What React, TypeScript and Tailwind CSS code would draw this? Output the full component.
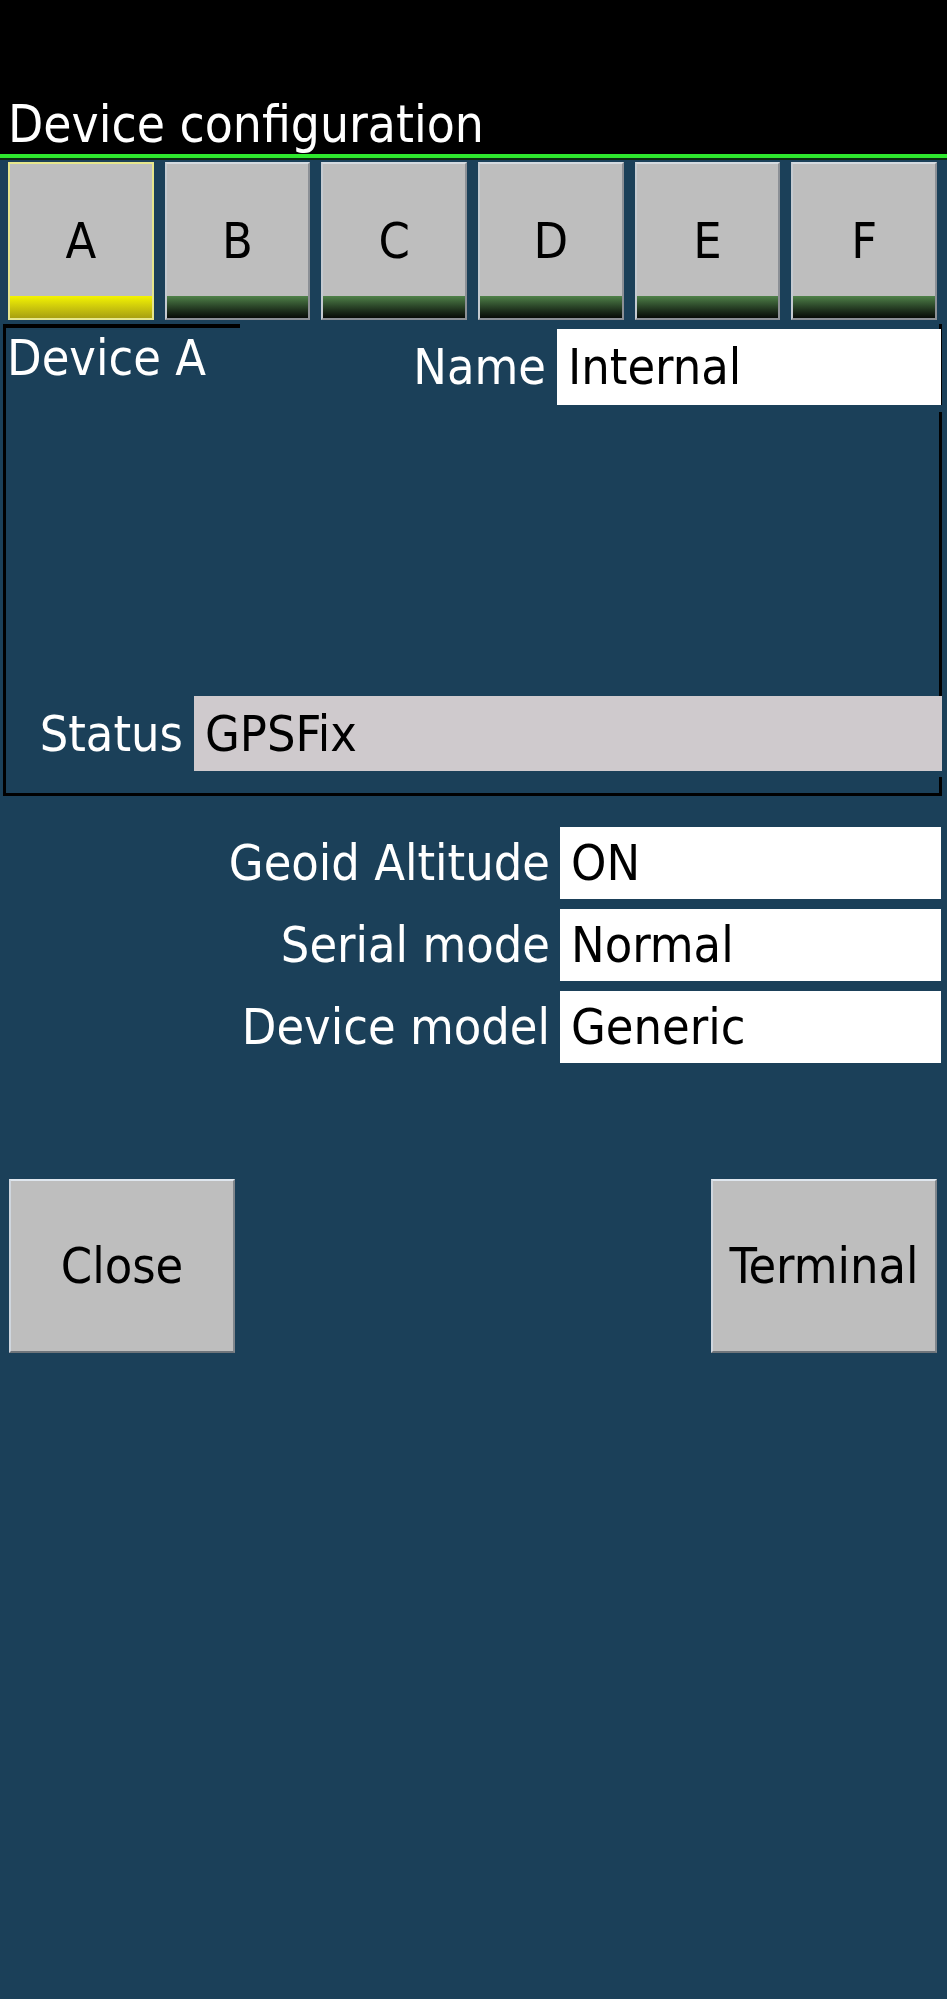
const font = { fontFamily: '"DejaVu Sans Condensed", "DejaVu Sans", sans-serif' }

const tabs = ['A', 'B', 'C', 'D', 'E', 'F']

function Tab({ label, selected }: { label: string; selected: boolean }) {
  return (
    <div
      className={`relative flex-1 flex items-center justify-center bg-[#bebebe] border-2 ${
        selected
          ? 'border-[#e6e68c]'
          : 'border-t-[#d4dae0] border-l-[#c4cad0] border-r-[#8c9096] border-b-[#8c9096]'
      }`}
    >
      <span className="text-[50px] leading-none text-black">{label}</span>
      <div
        className={`absolute inset-x-0 bottom-0 h-[22px] bg-gradient-to-b ${
          selected ? 'from-[#f4f400] to-[#a8a010]' : 'from-[#4f8249] to-[#080c08]'
        }`}
      />
    </div>
  )
}

function Field({ label, value }: { label: string; value: string }) {
  return (
    <div className="flex items-stretch justify-end h-[72px]">
      <span className="self-center pr-[10px] text-white text-[50px] leading-none">{label}</span>
      <div className="flex items-center pl-[11px] w-[381px] bg-white text-black text-[50px] leading-none">
        {value}
      </div>
    </div>
  )
}

function Button({ label }: { label: string }) {
  return (
    <button className="w-[226px] h-[174px] flex items-center justify-center bg-[#bebebe] border-2 border-t-[#dfe6ee] border-l-[#cfd6de] border-r-[#80868c] border-b-[#6f757b] text-black text-[50px] leading-none">
      {label}
    </button>
  )
}

export default function App() {
  return (
    <div className="min-h-[1999px] bg-[#1b4059]" style={font}>
      <div className="h-[154px] bg-black flex items-end pl-[8px] pb-[4px]">
        <h1 className="text-white text-[51px] leading-none">Device configuration</h1>
      </div>
      <div className="h-[4px] bg-[#2ee82e]" />
      <div className="h-[2px] bg-[#0c2a12]" />

      <div className="flex gap-[11px] pl-[8px] pr-[10px] pt-[2px] h-[160px]">
        {tabs.map((t) => (
          <Tab key={t} label={t} selected={t === 'A'} />
        ))}
      </div>

      <div className="ml-[3px] w-[939px] mt-[4px] border-x-[3px] border-b-[3px] border-black flex flex-col">
        <div className="-ml-[3px] w-[237px] h-[4px] bg-black" />
        <div className="flex items-start mt-[1px] h-[76px]">
          <span className="pl-[1px] pt-[4px] text-white text-[50px] leading-none">Device A</span>
          <div className="flex-1" />
          <span className="self-center pr-[11px] text-white text-[50px] leading-none">Name</span>
          <div className="relative -mr-[2px] w-[384px] h-full flex items-center pl-[11px] bg-white text-black text-[50px] leading-none">
            Internal
          </div>
        </div>
        <div className="relative -mr-[3px] h-[7px] bg-[#1b4059]" />
        <div className="flex items-stretch justify-end mt-[284px] h-[75px]">
          <span className="self-center pr-[11px] text-white text-[50px] leading-none">Status</span>
          <div className="relative -mr-[3px] w-[748px] flex items-center pl-[11px] bg-[#cfcacd] text-black text-[50px] leading-none">
            GPSFix
          </div>
        </div>
        <div className="relative -mr-[3px] h-[6px] bg-[#1b4059]" />
        <div className="h-[16px]" />
      </div>

      <div className="mt-[31px] pr-[6px] flex flex-col gap-[10px]">
        <Field label="Geoid Altitude" value="ON" />
        <Field label="Serial mode" value="Normal" />
        <Field label="Device model" value="Generic" />
      </div>

      <div className="mt-[116px] flex justify-between pl-[9px] pr-[10px]">
        <Button label="Close" />
        <Button label="Terminal" />
      </div>
    </div>
  )
}
